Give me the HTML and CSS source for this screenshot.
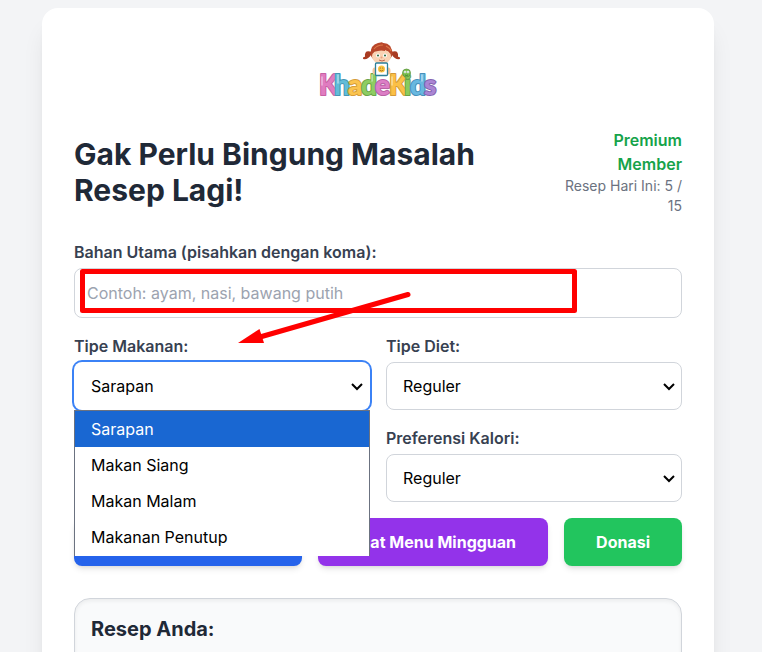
FILE: index.html
```html
<!DOCTYPE html>
<html lang="id">
<head>
<meta charset="utf-8">
<meta name="viewport" content="width=device-width, initial-scale=1">
<title>KhadeKids</title>
<link rel="stylesheet" href="styles.css">
</head>
<body>
<main class="card">
  <svg class="logo" viewBox="0 0 120 64" aria-label="KhadeKids">
    <g class="logo-word">
      <text y="55"><tspan x="1" fill="#e07cc0" stroke="#c661a4">K</tspan><tspan x="16" fill="#62bcd8" stroke="#4596b4">h</tspan><tspan x="30" fill="#fbc44e" stroke="#d69c3a">a</tspan><tspan x="43" fill="#8ecd62" stroke="#69a34a">d</tspan><tspan x="57" fill="#dc7ec6" stroke="#b863a4">e</tspan><tspan x="71" fill="#fbc046" stroke="#d39a38">K</tspan><tspan x="86" fill="#8acb5c" stroke="#68a247">i</tspan><tspan x="92" fill="#68b8e0" stroke="#4790ba">d</tspan><tspan x="106" fill="#aa86d4" stroke="#8462ae">s</tspan></text>
    </g>
    <path d="M4 37v8M20 35v8M54 35v6M74 37v8M104 35v6" fill="none" stroke="#fff" stroke-opacity=".55" stroke-width="1.3" stroke-linecap="round"/>
    <circle cx="88.500" cy="33" r="4" fill="#79be4d" stroke="#568f38" stroke-width=".7"/>
    <circle cx="87" cy="32" r="1.300" fill="#fff"/><circle cx="90" cy="32" r="1.300" fill="#fff"/>
    <circle cx="87" cy="32" r=".5" fill="#263"/><circle cx="90" cy="32" r=".5" fill="#263"/>
    <path d="M87 35q1.500 1 3 0" fill="none" stroke="#263" stroke-width=".6"/>
    <path d="M54 12q-8-3-7 5q-2-1-2 2q5 1 8-4zM73 12q8-3 7 5q2-1 2 2q-5 1-8-4z" fill="#a93b22"/>
    <ellipse cx="63.500" cy="13" rx="11" ry="9" fill="#b8492a"/>
    <ellipse cx="63.500" cy="16.500" rx="9.500" ry="7.500" fill="#fad3b4"/>
    <path d="M53 14q-1-9 7-11l5-1l-1 1q10-1 10 11q-3-3-7-4l0 1q-4-1-7 0q-4 0-7 3z" fill="#b8462a"/>
    <path d="M56 9q3-4 9-4M68 6q4 2 5 5" fill="none" stroke="#df7848" stroke-width="1.200"/>
    <circle cx="60" cy="15.500" r="2" fill="#fff"/><circle cx="67" cy="15.500" r="2" fill="#fff"/>
    <circle cx="60" cy="15.500" r="1.100" fill="#387347"/><circle cx="67" cy="15.500" r="1.100" fill="#387347"/>
    <circle cx="63.500" cy="17.500" r="1" fill="#eaa27e"/>
    <path d="M61 20q3 2 6 0" fill="none" stroke="#b24c39" stroke-width=".8"/>
    <ellipse cx="56.500" cy="31" rx="2" ry="3.500" fill="#f5c49d"/><ellipse cx="70.500" cy="31" rx="2" ry="3.500" fill="#f5c49d"/>
    <rect x="57.500" y="23" width="12" height="12.500" rx="1" fill="#fff" stroke="#2d8099" stroke-width="1.300"/>
    <circle cx="63.500" cy="29" r="3.500" fill="#fbc53f"/>
    <circle cx="62.200" cy="28" r=".5" fill="#764a15"/><circle cx="64.800" cy="28" r=".5" fill="#764a15"/>
    <path d="M61.500 30q2 2 4 0" fill="none" stroke="#965c16" stroke-width=".7"/>
  </svg>

  <header class="intro">
    <h1>Gak Perlu Bingung Masalah Resep Lagi!</h1>
    <div class="member">
      <p class="member-plan">Premium Member</p>
      <p class="member-quota">Resep Hari Ini: 5 / 15</p>
    </div>
  </header>

  <form class="form">
    <div class="field">
      <label for="bahan">Bahan Utama (pisahkan dengan koma):</label>
      <div class="control">
        <input id="bahan" type="text" placeholder="Contoh: ayam, nasi, bawang putih">
        <svg class="marker" width="608" height="50" aria-hidden="true">
          <rect x="8.500" y="3.500" width="492" height="39" fill="none" stroke="#f00" stroke-width="5" stroke-linejoin="round"/>
          <path d="M334 26.500L186 69" stroke="#f00" stroke-width="5" stroke-linecap="round"/>
          <path d="M164 75L185.500 61L190 75z" fill="#f00"/>
        </svg>
      </div>
    </div>

    <div class="options">
      <div class="field">
        <label for="tipe">Tipe Makanan:</label>
        <div class="control">
          <select id="tipe" class="is-open"><option>Sarapan</option><option>Makan Siang</option><option>Makan Malam</option><option>Makanan Penutup</option></select>
          <svg class="chevron" viewBox="0 0 14 10"><path d="M2 2l5 5l5-5"/></svg>
          <ul class="menu" role="listbox" aria-label="Tipe Makanan">
            <li role="option" aria-selected="true">Sarapan</li>
            <li role="option">Makan Siang</li>
            <li role="option">Makan Malam</li>
            <li role="option">Makanan Penutup</li>
          </ul>
        </div>
      </div>
      <div class="field">
        <label for="diet">Tipe Diet:</label>
        <div class="control">
          <select id="diet"><option>Reguler</option></select>
          <svg class="chevron" viewBox="0 0 14 10"><path d="M2 2l5 5l5-5"/></svg>
        </div>
      </div>
      <div class="field field-right">
        <label for="kalori">Preferensi Kalori:</label>
        <div class="control">
          <select id="kalori"><option>Reguler</option></select>
          <svg class="chevron" viewBox="0 0 14 10"><path d="M2 2l5 5l5-5"/></svg>
        </div>
      </div>
    </div>

    <div class="actions">
      <button type="button" class="btn btn-blue" aria-label="Buat Resep"></button>
      <button type="button" class="btn btn-purple">Buat Menu Mingguan</button>
      <button type="button" class="btn btn-green">Donasi</button>
    </div>
  </form>

  <section class="result">
    <h2>Resep Anda:</h2>
  </section>
</main>
</body>
</html>
```
FILE: styles.css
```css
* { box-sizing: border-box; }

html { scrollbar-width: none; }

body {
  margin: 0;
  padding: 8px 48px 32px 42px;
  background: #f3f4f6;
  color: #1f2937;
  font: 16px/24px Inter, "Liberation Sans", sans-serif;
}

h1, h2, p, ul { margin: 0; padding: 0; }

.card {
  max-width: 672px;
  margin: 0 auto;
  padding: 32px;
  border-radius: 16px;
  background: #fff;
  box-shadow: 0 20px 25px -5px rgba(0, 0, 0, 0.1), 0 8px 10px -6px rgba(0, 0, 0, 0.1);
}

.logo {
  display: block;
  width: 120px;
  height: 64px;
  margin: 0 auto 24px;
}

.logo-word {
  font: 900 28px Lato, sans-serif;
  stroke-width: 2px;
  stroke-linejoin: round;
  paint-order: stroke;
}

.intro {
  display: flex;
  align-items: center;
  justify-content: space-between;
  gap: 64px;
  margin-bottom: 24px;
}

h1 {
  flex: 1;
  font-size: 30px;
  line-height: 36px;
  font-weight: 700;
}

.member {
  width: 120px;
  text-align: right;
}

.member-plan {
  color: #16a34a;
  font-weight: 600;
}

.member-quota {
  color: #6b7280;
  font-size: 14px;
  line-height: 20px;
}

.form {
  display: flex;
  flex-direction: column;
  gap: 16px;
}

label {
  display: block;
  margin-bottom: 4px;
  color: #374151;
  font-weight: 600;
}

.control { position: relative; }

input, select {
  display: block;
  width: 100%;
  border: 1px solid #d1d5db;
  border-radius: 8px;
  background: #fff;
  color: #000;
  font: inherit;
}

input {
  height: 50px;
  padding: 12px;
}

input::placeholder { color: #9ca3af; }

select {
  height: 48px;
  padding: 0 16px;
  appearance: none;
}

select.is-open {
  border-color: transparent;
  box-shadow: 0 0 0 2px #3b82f6;
}

.chevron {
  position: absolute;
  top: 20px;
  right: 6px;
  width: 14px;
  height: 10px;
  fill: none;
  stroke: #000;
  stroke-width: 2;
  pointer-events: none;
}

.marker {
  position: absolute;
  z-index: 3;
  top: 0;
  left: 0;
  overflow: visible;
  pointer-events: none;
}

.options {
  display: grid;
  grid-template-columns: 1fr 1fr;
  gap: 16px;
}

.field-right { grid-column: 2; }

.menu {
  position: absolute;
  z-index: 2;
  top: 100%;
  left: 0;
  width: 100%;
  padding-bottom: 1px;
  border: 1px solid #6b7280;
  border-bottom: 0;
  background: #fff;
  color: #000;
  list-style: none;
}

.menu li {
  padding: 6px 16px;
}

.menu [aria-selected="true"] {
  background: #1967d2;
  color: #fff;
}

.actions {
  display: flex;
  gap: 16px;
}

.btn {
  padding: 12px 32px;
  border: 0;
  border-radius: 8px;
  color: #fff;
  font: inherit;
  font-weight: 700;
  white-space: nowrap;
  box-shadow: 0 4px 6px -1px rgba(0, 0, 0, 0.1), 0 2px 4px -2px rgba(0, 0, 0, 0.1);
}

.btn-blue, .btn-purple { flex: 1 1 0; }
.btn-blue { background: #2563eb; }
.btn-purple { background: #9333ea; }
.btn-green { background: #22c55e; }

.result {
  min-height: 200px;
  margin-top: 32px;
  padding: 16px;
  border: 1px solid #d1d5db;
  border-radius: 16px;
  background: #f9fafb;
  box-shadow: inset 0 2px 4px rgba(0, 0, 0, 0.06);
}

h2 {
  font-size: 20px;
  line-height: 28px;
  font-weight: 700;
}
```
